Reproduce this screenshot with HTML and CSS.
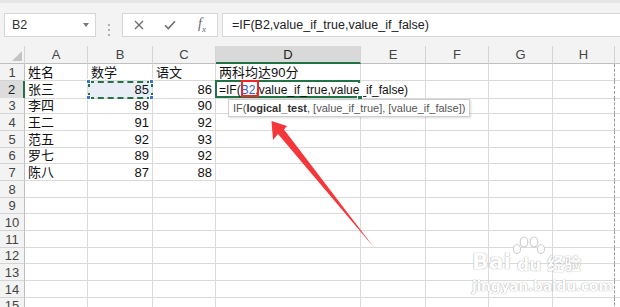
FILE: index.html
```html
<!DOCTYPE html>
<html lang="zh">
<head>
	<meta charset="UTF-8">
	<title>IF函数</title>
	<link rel="stylesheet" href="styles.css">
</head>
<body>
<div id="app">
	<div class="toolbar">
		<div class="namebox"><span>B2</span><i class="caret"></i></div>
		<div class="grip"><b></b><b></b><b></b></div>
		<div class="btns">
			<svg width="10" height="10" viewBox="0 0 10 10"><path d="M1 1L9 9M9 1L1 9" stroke="#6b6b6b" stroke-width="1.3" fill="none"/></svg>
			<svg width="12" height="10" viewBox="0 0 12 10"><path d="M1 5.2L4.3 8.6L11 1.2" stroke="#6b6b6b" stroke-width="1.5" fill="none"/></svg>
			<span class="fx">f<sub>x</sub></span>
		</div>
		<div class="formula">=IF(B2,value_if_true,value_if_false)</div>
	</div>

	<div class="sheet">
		<div class="row head">
			<div class="corner"><i></i></div><div>A</div><div>B</div><div>C</div><div class="on">D</div><div>E</div><div>F</div><div>G</div><div class="pb">H</div><div></div>
		</div>
		<div class="row h17">
			<div class="rh">1</div><div>姓名</div><div>数学</div><div>语文</div><div>两科均达90分</div><div></div><div></div><div></div><div class="pb"></div><div></div>
		</div>
		<div class="row h17">
			<div class="rh on">2</div><div>张三</div>
			<div class="n sel">85<i class="hd tl"></i><i class="hd tr"></i><i class="hd bl"></i><i class="hd br"></i></div>
			<div class="n">86</div>
			<div class="edit"><span>=IF(<em>B2</em>,value_if_true,value_if_false)</span><i class="fill"></i></div>
			<div></div><div></div><div></div><div class="pb"></div><div></div>
		</div>
		<div class="row h16">
			<div class="rh">3</div><div>李四</div><div class="n">89</div><div class="n">90</div><div></div><div></div><div></div><div></div><div class="pb"></div><div></div>
		</div>
		<div class="row h17">
			<div class="rh">4</div><div>王二</div><div class="n">91</div><div class="n">92</div><div></div><div></div><div></div><div></div><div class="pb"></div><div></div>
		</div>
		<div class="row h17">
			<div class="rh">5</div><div>范五</div><div class="n">92</div><div class="n">93</div><div></div><div></div><div></div><div></div><div class="pb"></div><div></div>
		</div>
		<div class="row h16">
			<div class="rh">6</div><div>罗七</div><div class="n">89</div><div class="n">92</div><div></div><div></div><div></div><div></div><div class="pb"></div><div></div>
		</div>
		<div class="row h17">
			<div class="rh">7</div><div>陈八</div><div class="n">87</div><div class="n">88</div><div></div><div></div><div></div><div></div><div class="pb"></div><div></div>
		</div>
		<div class="row h17">
			<div class="rh">8</div><div></div><div></div><div></div><div></div><div></div><div></div><div></div><div class="pb"></div><div></div>
		</div>
		<div class="row h16">
			<div class="rh">9</div><div></div><div></div><div></div><div></div><div></div><div></div><div></div><div class="pb"></div><div></div>
		</div>
		<div class="row h17">
			<div class="rh">10</div><div></div><div></div><div></div><div></div><div></div><div></div><div></div><div class="pb"></div><div></div>
		</div>
		<div class="row h17">
			<div class="rh">11</div><div></div><div></div><div></div><div></div><div></div><div></div><div></div><div class="pb"></div><div></div>
		</div>
		<div class="row h16">
			<div class="rh">12</div><div></div><div></div><div></div><div></div><div></div><div></div><div></div><div class="pb"></div><div></div>
		</div>
		<div class="row h17">
			<div class="rh">13</div><div></div><div></div><div></div><div></div><div></div><div></div><div></div><div class="pb"></div><div></div>
		</div>
		<div class="row h17">
			<div class="rh">14</div><div></div><div></div><div></div><div></div><div></div><div></div><div></div><div class="pb"></div><div></div>
		</div>
		<div class="row h16">
			<div class="rh">15</div><div></div><div></div><div></div><div></div><div></div><div></div><div></div><div class="pb"></div><div></div>
		</div>
	</div>

	<!-- 提示框 -->
	<div class="tip">IF(<b>logical_test</b>, [value_if_true], [value_if_false])</div>
	<!-- 标注 -->
	<div class="mark"></div>
	<svg class="arrow" width="620" height="307" viewBox="0 0 620 307">
		<polygon points="271.5,121 287,126 284,129.5 374,247.5 278,134 273,140" fill="#f5363a"/>
	</svg>

	<div class="wm">
		<div class="wm-logo">
			<span>Bai</span>
			<span class="paw">
				<svg width="34" height="20" viewBox="0 0 34 20">
					<g fill="#fff" stroke="#d0d0d0" stroke-width="1.2">
						<ellipse cx="5" cy="13" rx="3.5" ry="4.5"/>
						<ellipse cx="12" cy="6" rx="3.8" ry="5"/>
						<ellipse cx="22" cy="6" rx="3.8" ry="5"/>
						<ellipse cx="29" cy="13" rx="3.5" ry="4.5"/>
					</g>
				</svg>
				<span>du</span>
			</span>
			<span class="jy">经验</span>
		</div>
		<div class="wm-url">jingyan.baidu.com</div>
	</div>
</div>
</body>
</html>
```

FILE: styles.css
```css
* {
	padding: 0;
	margin: 0;
	box-sizing: border-box;
}
body {
	background: #fff;
	font-family: "Liberation Sans", "Noto Sans CJK SC", sans-serif;
}
#app {
	position: relative;
	width: 620px;
	height: 307px;
	overflow: hidden;
}

/* 编辑栏 */
.toolbar {
	display: flex;
	height: 46px;
	padding: 10px 0 0 4px;
	background: #f3f3f3;
	border-top: 3px solid #e6e6e6;
}
.namebox, .btns, .formula {
	height: 24px;
	background: #fff;
	border: 1px solid #d6d6d6;
}
.namebox {
	width: 92px;
	display: flex;
	align-items: center;
	justify-content: space-between;
	padding: 0 6px 0 7px;
	font-size: 12.5px;
	color: #333;
}
.caret {
	width: 0;
	height: 0;
	border-left: 3.5px solid transparent;
	border-right: 3.5px solid transparent;
	border-top: 4px solid #777;
}
.grip {
	width: 26px;
	display: flex;
	flex-direction: column;
	align-items: center;
	justify-content: center;
	gap: 3px;
}
.grip b {
	width: 2px;
	height: 2px;
	background: #b0b0b0;
}
.btns {
	width: 96px;
	display: flex;
	align-items: center;
	padding-left: 11px;
	gap: 20px;
}
.fx {
	font-family: "Liberation Serif", serif;
	font-style: italic;
	font-size: 14px;
	color: #666;
	margin-left: 2px;
}
.fx sub {
	font-size: 9px;
}
.formula {
	flex: 1;
	margin-left: 4px;
	margin-right: -10px;
	padding-left: 9px;
	font-size: 12.5px;
	line-height: 22px;
	color: #222;
}

/* 表格 */
.row {
	display: grid;
	grid-template-columns: 25px 63px 65px 63px 145px 65px 63px 64px 62px 1fr;
	font-size: 13px;
	color: #111;
}
.row > div {
	border-right: 1px solid #dadada;
	border-bottom: 1px solid #dadada;
	padding: 0 3px;
	white-space: nowrap;
	overflow: hidden;
}
.row > div.pb {
	border-right: 1px dashed #9a9a9a;
}
.h17 { height: 17px; line-height: 17px; }
.h16 { height: 16px; line-height: 16px; }

.head {
	height: 18px;
	line-height: 17px;
	background: #f3f3f3;
	color: #444;
}
.head > div {
	text-align: center;
	border-right-color: #d4d4d4;
	border-bottom-color: #bfbfbf;
}
.head > div.pb {
	border-right: 1px solid #d4d4d4;
}
.head > div.on {
	background: #d9d9d9;
	color: #222;
	border-bottom: 2px solid #217346;
}
.corner {
	position: relative;
}
.corner i {
	position: absolute;
	right: 2px;
	bottom: 2px;
	width: 0;
	height: 0;
	border-left: 10px solid transparent;
	border-bottom: 10px solid #c4c4c4;
}
.row > div.rh {
	background: #f3f3f3;
	color: #444;
	text-align: center;
	padding: 0;
	border-right-color: #bfbfbf;
	border-bottom-color: #d4d4d4;
}
.row > div.rh.on {
	background: #dcdcdc;
	color: #222;
	border-right: 2px solid #217346;
}
.row > div.n {
	text-align: right;
}

/* 复制选区 */
.row > div.sel {
	position: relative;
	overflow: visible;
	background: #e9eef6;
	outline: 2px dashed #217346;
	outline-offset: -2px;
}
.hd {
	position: absolute;
	width: 5px;
	height: 5px;
	background: #3f73c9;
	border: 1px solid #fff;
}
.hd.tl { left: -2px; top: -2px; }
.hd.tr { right: -2px; top: -2px; }
.hd.bl { left: -2px; bottom: -2px; }
.hd.br { right: -2px; bottom: -2px; }

/* 编辑中的单元格 */
.row > div.edit {
	position: relative;
	overflow: visible;
	z-index: 2;
	padding: 0 0 0 3px;
}
.edit::after {
	content: "";
	position: absolute;
	left: -1px;
	top: -1px;
	right: 0;
	bottom: 0;
	border: 2px solid #217346;
}
.edit span {
	position: relative;
	z-index: 1;
	display: inline-block;
	vertical-align: top;
	margin-top: 2px;
	height: 12px;
	line-height: 14px;
	padding-right: 3px;
	background: #fff;
	font-size: 12px;
	color: #111;
}
.edit em {
	font-style: normal;
	color: #2f62c9;
}
.fill {
	position: absolute;
	right: -3px;
	bottom: -3px;
	width: 6px;
	height: 6px;
	background: #217346;
	border: 1px solid #fff;
	z-index: 2;
}

.tip {
	position: absolute;
	left: 228px;
	top: 99px;
	width: 242px;
	height: 18px;
	padding-left: 4px;
	background: #fff;
	border: 1px solid #cfcfcf;
	box-shadow: 1px 1px 2px rgba(0, 0, 0, .15);
	font-size: 11px;
	line-height: 16px;
	color: #555;
	white-space: nowrap;
	z-index: 3;
}
.tip b {
	color: #333;
}
.mark {
	position: absolute;
	left: 241px;
	top: 80px;
	width: 18px;
	height: 17px;
	border: 2px solid #f0262a;
	z-index: 4;
}
.arrow {
	position: absolute;
	left: 0;
	top: 0;
	z-index: 5;
}

/* 水印 */
.wm {
	position: absolute;
	left: 472px;
	top: 236px;
	color: #fff;
	text-shadow: 0 0 1px #a8a8a8, 0 0 1px #a8a8a8;
	z-index: 1;
}
.wm-logo {
	display: flex;
	align-items: flex-end;
	height: 38px;
	font-size: 22px;
	font-weight: bold;
	font-family: "DejaVu Sans", sans-serif;
}
.paw {
	display: flex;
	flex-direction: column;
	align-items: center;
	margin: 0 1px;
}
.paw span {
	font-size: 17px;
	line-height: 18px;
}
.jy {
	font-family: "Noto Sans CJK SC", sans-serif;
	font-size: 17px;
	line-height: 22px;
}
.wm-url {
	margin-top: 4px;
	font-size: 14px;
	font-weight: bold;
	font-family: "DejaVu Sans", sans-serif;
	letter-spacing: -0.3px;
}
```
